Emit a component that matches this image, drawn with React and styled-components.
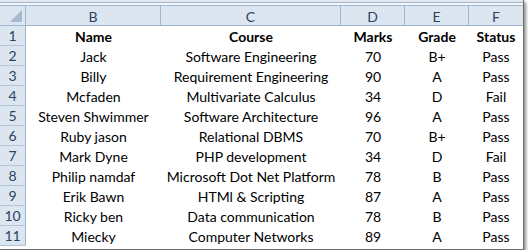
import React from 'react';
import styled, { createGlobalStyle } from 'styled-components';

const GlobalStyle = createGlobalStyle`
  body {
    margin: 0;
    background-color: #fff;
    font-family: Lato, "Liberation Sans", sans-serif;
  }
`;

const Frame = styled.div`
  width: 523px;
  border-right: 1px solid #6d6d6d;
  border-bottom: 1px solid #6d6d6d;
  box-shadow: 2px 2px 3px rgba(0, 0, 0, 0.45);
  background-color: #fff;
  padding-bottom: 3px;
`;

const TopStrip = styled.div`
  height: 2px;
  background-color: #e2e8ef;
  border-bottom: 1px solid #a2b4c7;
`;

const TopGap = styled.div`
  height: 2px;
  background-color: #f4f7fa;
  border-bottom: 1px solid #9eb6ce;
`;

const Sheet = styled.div`
  display: grid;
  grid-template-columns: 26px 135px 180px 64px 64px 54px;
  grid-auto-rows: 20px;
`;

const ColHead = styled.div`
  box-sizing: border-box;
  display: flex;
  align-items: center;
  justify-content: center;
  background-color: #dce6f1;
  border-bottom: 1px solid #9eb6ce;
  border-right: ${(p) => (p.$last ? 'none' : '1px solid #9eb6ce')};
  color: #2b4361;
  font-size: 14px;
  padding-top: 1px;
`;

const Corner = styled(ColHead)`
  position: relative;
  &::after {
    content: '';
    position: absolute;
    right: 3px;
    bottom: 3px;
    width: 0;
    height: 0;
    border-left: 12px solid transparent;
    border-bottom: 12px solid #a6b9cf;
  }
`;

const RowHead = styled.div`
  box-sizing: border-box;
  display: flex;
  align-items: center;
  justify-content: center;
  background-color: #dce6f1;
  border-right: 1px solid #9eb6ce;
  border-bottom: 1px solid #b1c5da;
  color: #2b4361;
  font-size: 14px;
`;

const Cell = styled.div`
  display: flex;
  align-items: center;
  justify-content: center;
  padding-top: 1px;
  color: #000;
  font-size: 14px;
  font-weight: ${(p) => (p.$bold ? 700 : 400)};
  white-space: nowrap;
`;

const columns = ['B', 'C', 'D', 'E', 'F'];

const rows = [
  ['Name', 'Course', 'Marks', 'Grade', 'Status'],
  ['Jack', 'Software Engineering', '70', 'B+', 'Pass'],
  ['Billy', 'Requirement Engineering', '90', 'A', 'Pass'],
  ['Mcfaden', 'Multivariate Calculus', '34', 'D', 'Fail'],
  ['Steven Shwimmer', 'Software Architecture', '96', 'A', 'Pass'],
  ['Ruby jason', 'Relational DBMS', '70', 'B+', 'Pass'],
  ['Mark Dyne', 'PHP development', '34', 'D', 'Fail'],
  ['Philip namdaf', 'Microsoft Dot Net Platform', '78', 'B', 'Pass'],
  ['Erik Bawn', 'HTMl & Scripting', '87', 'A', 'Pass'],
  ['Ricky ben', 'Data communication', '78', 'B', 'Pass'],
  ['Miecky', 'Computer Networks', '89', 'A', 'Pass'],
];

const App = () => {
  return (
    <>
      <GlobalStyle />
      <Frame>
        <TopStrip />
        <TopGap />
        <Sheet>
          <Corner />
          {columns.map((c, i) => (
            <ColHead key={c} $last={i === columns.length - 1}>
              {c}
            </ColHead>
          ))}
          {rows.map((row, r) => (
            <React.Fragment key={r}>
              <RowHead>{r + 1}</RowHead>
              {row.map((v, c) => (
                <Cell key={c} $bold={r === 0}>
                  {v}
                </Cell>
              ))}
            </React.Fragment>
          ))}
        </Sheet>
      </Frame>
    </>
  );
};

export default App;
